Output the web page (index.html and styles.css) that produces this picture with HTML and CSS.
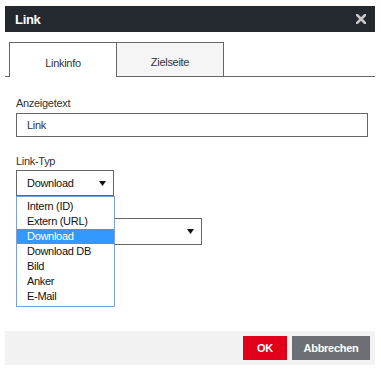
FILE: index.html
```html
<!DOCTYPE html>
<html lang="de">
<head>
    <meta charset="UTF-8">
    <meta name="viewport" content="width=device-width, initial-scale=1.0">
    <title>Link</title>
    <link rel="stylesheet" href="styles.css">
</head>
<body>
    <div class="dialog">
        <div class="dialog-header">
            <span class="dialog-title">Link</span>
            <svg class="close-icon" width="10" height="10" viewBox="0 0 10 10">
                <path d="M1 1 L9 9 M9 1 L1 9" stroke="#c9c9c9" stroke-width="2.6" stroke-linecap="square"/>
            </svg>
        </div>
        <div class="tabs">
            <div class="tab active">Linkinfo</div>
            <div class="tab">Zielseite</div>
        </div>
        <div class="panel">
            <div class="form-group">
                <label>Anzeigetext</label>
                <div class="text-input">Link</div>
            </div>
            <div class="form-group">
                <label>Link-Typ</label>
                <div class="select select-small">
                    <span>Download</span>
                    <svg class="arrow" width="7" height="5" viewBox="0 0 7 5"><path d="M0 0 H7 L3.5 5 Z" fill="#111"/></svg>
                </div>
                <ul class="dropdown">
                    <li>Intern (ID)</li>
                    <li>Extern (URL)</li>
                    <li class="selected">Download</li>
                    <li>Download DB</li>
                    <li>Bild</li>
                    <li>Anker</li>
                    <li>E-Mail</li>
                </ul>
            </div>
            <div class="select select-wide">
                <span></span>
                <svg class="arrow" width="7" height="5" viewBox="0 0 7 5"><path d="M0 0 H7 L3.5 5 Z" fill="#111"/></svg>
            </div>
        </div>
        <div class="dialog-footer">
            <button class="btn btn-ok">OK</button>
            <button class="btn btn-cancel">Abbrechen</button>
        </div>
    </div>
</body>
</html>
```

FILE: styles.css
```css
:root {
    --border-gray: #666;
    --header-bg: #24282f;
    --ok-red: #e2001a;
    --cancel-gray: #6c6f74;
}
body {
    font-family: "Liberation Sans", Arial, sans-serif;
    font-size: 11px;
    letter-spacing: -0.3px;
    color: #333;
    margin: 0;
    background-color: #fff;
}
.dialog {
    margin: 6px 0 0 5px;
    width: 370px;
    height: 359px;
    display: flex;
    flex-direction: column;
    background-color: #fff;
}
.dialog-header {
    height: 26px;
    background-color: var(--header-bg);
    display: flex;
    align-items: center;
    justify-content: space-between;
    padding: 0 9px 0 10px;
}
.dialog-title { color: #fff; font-weight: bold; font-size: 13px; }
.close-icon { display: block; }
.tabs {
    display: flex;
    margin-top: 10px;
    padding-left: 4px;
    border-bottom: 1px solid var(--border-gray);
}
.tab {
    box-sizing: border-box;
    width: 107px;
    height: 34px;
    padding-top: 5px;
    display: flex;
    align-items: center;
    justify-content: center;
    background-color: #f5f5f5;
    border: 1px solid var(--border-gray);
    border-left: none;
    border-bottom: none;
}
.tab.active {
    width: 108px;
    background-color: #fff;
    border-left: 1px solid var(--border-gray);
    height: 35px;
    margin-bottom: -1px;
}
.panel { padding: 19px 7px 0 11px; position: relative; }
.form-group { margin-bottom: 17px; position: relative; }
label { display: block; line-height: 14px; margin-bottom: 3px; }
.text-input {
    box-sizing: border-box;
    height: 24px;
    border: 1px solid var(--border-gray);
    padding-left: 10px;
    display: flex;
    align-items: center;
}
.select {
    box-sizing: border-box;
    border: 1px solid var(--border-gray);
    display: flex;
    align-items: center;
    justify-content: space-between;
    padding: 0 7px 0 10px;
    color: #111;
}
.select-small { width: 98px; height: 26px; margin-top: -1px; }
.select-wide { width: 186px; height: 27px; margin-top: -17px; position: relative; top: 22px; }
.arrow { display: block; }
.dropdown {
    position: absolute;
    z-index: 2;
    left: 0;
    top: 42px;
    box-sizing: border-box;
    width: 99px;
    margin: 0;
    padding: 2px 0;
    list-style: none;
    background-color: #fff;
    border: 1px solid #7c9fd4;
    color: #111;
}
.dropdown li { line-height: 15px; padding-left: 10px; }
.dropdown li.selected { background-color: #3399ff; color: #fff; }
.dialog-footer {
    margin-top: auto;
    background-color: #f2f2f2;
    display: flex;
    justify-content: flex-end;
    gap: 5px;
    padding: 5px 5px 5px 0;
}
.btn {
    font-family: inherit;
    font-size: 11px;
    letter-spacing: -0.3px;
    font-weight: bold;
    color: #fff;
    border: none;
    height: 24px;
    padding: 0;
    cursor: pointer;
}
.btn-ok { background-color: var(--ok-red); width: 44px; }
.btn-cancel { background-color: var(--cancel-gray); width: 78px; }
```
